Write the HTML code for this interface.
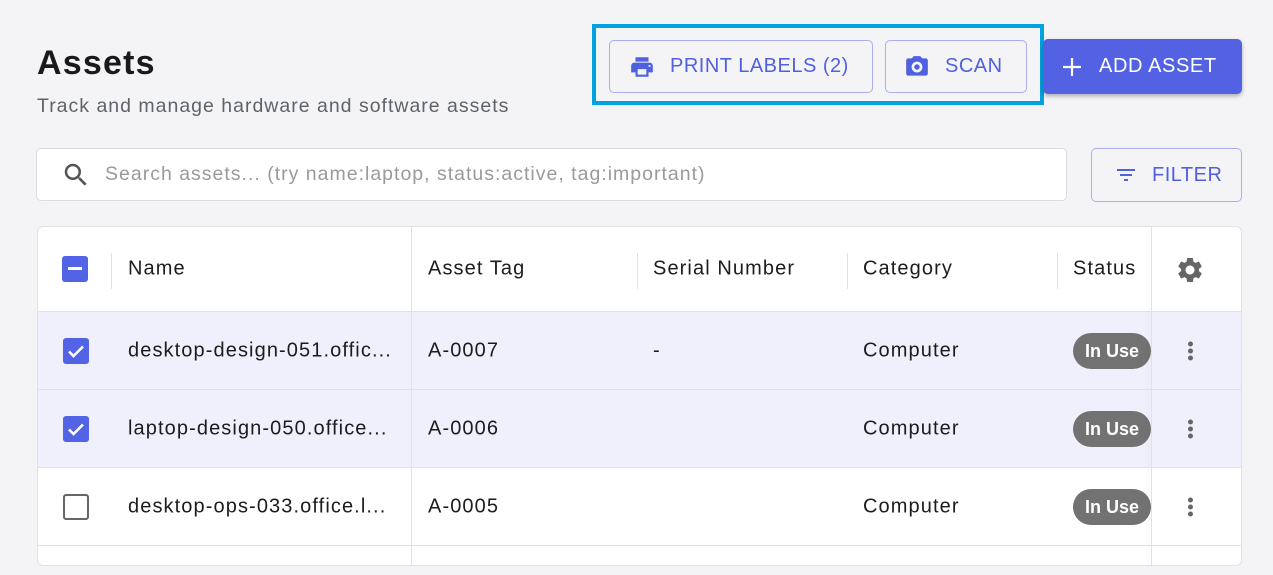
<!DOCTYPE html>
<html><head><meta charset="utf-8"><style>
*{box-sizing:border-box;margin:0;padding:0}
body{width:1273px;height:558px;background:#f4f4f6;font-family:"Liberation Sans",sans-serif;position:relative;overflow:hidden;color:#1c1c1e;letter-spacing:1.1px}
.a{position:absolute}
h1{position:absolute;left:37px;top:44px;font-size:34px;font-weight:700;color:#1a1a1a;letter-spacing:1.2px}
.sub{left:37px;top:95px;font-size:19.5px;color:#5f6368;letter-spacing:1.0px}
.ob{border:1px solid #a9aef0;border-radius:5px;color:#5060e0;font-size:20px;display:flex;align-items:center;background:#f4f4f6;letter-spacing:0.5px}
.tbl{left:37px;top:226px;width:1205px;height:340px;background:#fff;border:1px solid #e2e2e6;border-radius:6px}
.row{position:absolute;left:0;width:1203px;border-top:1px solid #e2e2e6}
.cell{position:absolute;font-size:20px;top:50%;transform:translateY(-50%);white-space:nowrap}
.cb{position:absolute;left:25px;width:26px;height:26px;border-radius:3px;background:#5363e6;top:50%;transform:translateY(-50%)}
.pill{position:absolute;left:1035px;top:50%;transform:translateY(-50%);width:78px;height:36px;border-radius:18px;background:#727272;color:#fff;font-weight:700;font-size:18px;text-align:center;line-height:36px;letter-spacing:0}
.dots{position:absolute;left:1150px;top:50%;transform:translateY(-50%);width:4px}
.dots i{display:block;width:5px;height:5px;border-radius:50%;background:#666;margin:2px 0}
</style></head><body>
<h1>Assets</h1>
<div class="a sub">Track and manage hardware and software assets</div>
<div class="a" style="left:592px;top:24px;width:452px;height:81px;border:4px solid #00a3e0"></div>
<div class="a ob" style="left:609px;top:40px;width:264px;height:53px;padding-left:18px">
<svg width="28" height="26" viewBox="0 0 24 24"><path fill="#5060e0" d="M19 8H5c-1.66 0-3 1.34-3 3v6h4v4h12v-4h4v-6c0-1.66-1.340-3-3-3zm-3 11H8v-5h8v5zm3-7c-.55 0-1-.45-1-1s.45-1 1-1 1 .45 1 1-.45 1-1 1zm-1-9H6v4h12V3z"/></svg>
<span style="margin-left:14px">PRINT LABELS (2)</span></div>
<div class="a ob" style="left:885px;top:40px;width:142px;height:53px;padding-left:18px">
<svg width="26" height="26" viewBox="0 0 24 24"><path fill="#5060e0" d="M9 2 7.17 4H4c-1.1 0-2 .9-2 2v12c0 1.1.9 2 2 2h16c1.1 0 2-.9 2-2V6c0-1.1-.9-2-2-2h-3.17L15 2H9zm3 15a5 5 0 1 1 0-10 5 5 0 0 1 0 10zm0-2.5a2.5 2.5 0 1 0 0-5 2.5 2.5 0 0 0 0 5z"/></svg>
<span style="margin-left:15px">SCAN</span></div>
<div class="a" style="left:1043px;top:39px;width:199px;height:55px;background:#5262e3;border-radius:5px;box-shadow:0 2px 4px rgba(0,0,0,.3);color:#fff;font-size:20px;display:flex;align-items:center;padding-left:18px;letter-spacing:0.6px">
<svg width="22" height="22" viewBox="0 0 22 22"><path d="M11 2v18M2 11h18" stroke="#fff" stroke-width="2.2"/></svg><span style="margin-left:16px">ADD ASSET</span></div>
<div class="a" style="left:36px;top:148px;width:1031px;height:53px;background:#fff;border:1px solid #dcdce0;border-radius:5px;display:flex;align-items:center;padding-left:24px;font-size:19.5px;color:#9a9a9e;letter-spacing:1.0px">
<svg width="30" height="30" viewBox="0 0 24 24"><path fill="#555" d="M15.5 14h-.79l-.28-.27A6.47 6.47 0 0 0 16 9.5 6.5 6.5 0 1 0 9.5 16c1.61 0 3.09-.59 4.230-1.57l.27.28v.79l5 4.99L20.49 19l-4.99-5zm-6 0C7.01 14 5 11.990 5 9.5S7.01 5 9.5 5 14 7.01 14 9.5 11.99 14 9.5 14z"/></svg>
<span style="margin-left:14px">Search assets... (try name:laptop, status:active, tag:important)</span></div>
<div class="a ob" style="left:1091px;top:148px;width:151px;height:54px;padding-left:22px">
<svg width="24" height="24" viewBox="0 0 24 24"><path fill="#5060e0" d="M10 18h4v-2h-4v2zM3 6v2h18V6H3zm3 7h12v-2H6v2z"/></svg><span style="margin-left:14px">FILTER</span></div>

<div class="a tbl">
 <div class="row" style="top:0;height:84px;border-top:none">
  <div class="cb" style="left:24px"><div style="position:absolute;left:6px;top:11px;width:14px;height:3px;background:#fff"></div></div>
  <div class="a" style="left:73px;top:26px;width:1px;height:36px;background:#e2e2e6"></div>
  <div class="cell" style="left:90px">Name</div>
  <div class="cell" style="left:390px">Asset Tag</div>
  <div class="a" style="left:599px;top:26px;width:1px;height:36px;background:#e2e2e6"></div>
  <div class="cell" style="left:615px">Serial Number</div>
  <div class="a" style="left:809px;top:26px;width:1px;height:36px;background:#e2e2e6"></div>
  <div class="cell" style="left:825px">Category</div>
  <div class="a" style="left:1019px;top:26px;width:1px;height:36px;background:#e2e2e6"></div>
  <div class="cell" style="left:1035px">Status</div>
  <svg class="a" style="left:1137px;top:28px" width="30" height="30" viewBox="0 0 24 24"><path fill="#666" d="M19.14 12.94c.04-.3.06-.61.06-.94 0-.32-.02-.64-.07-.94l2.030-1.58a.49.49 0 0 0 .12-.61l-1.92-3.32a.49.49 0 0 0-.59-.22l-2.39.96c-.5-.38-1.03-.7-1.62-.94l-.36-2.54a.48.48 0 0 0-.48-.41h-3.84c-.24 0-.43.17-.47.41l-.36 2.54c-.59.24-1.13.57-1.62.94l-2.39-.96a.48.48 0 0 0-.59.22L2.74 8.87c-.12.21-.08.47.12.61l2.03 1.58c-.05.3-.07.63-.07.94s.02.64.07.94l-2.03 1.58a.49.49 0 0 0-.12.61l1.92 3.32c.12.22.37.29.59.22l2.39-.96c.5.38 1.03.7 1.62.94l.36 2.54c.05.24.24.41.48.41h3.84c.24 0 .44-.17.47-.41l.36-2.54c.59-.24 1.13-.56 1.62-.94l2.39.96c.22.08.47 0 .59-.22l1.92-3.32c.12-.22.07-.47-.12-.61l-2.01-1.58zM12 15.6c-1.98 0-3.6-1.62-3.6-3.6s1.62-3.6 3.6-3.6 3.6 1.62 3.6 3.6-1.62 3.6-3.6 3.6z"/></svg>
 </div>
 <div class="row" style="top:84px;height:78px;background:#eff0fc">
  <div class="cb"><svg width="26" height="26" viewBox="0 0 26 26"><path d="M6 13.5l4.5 4.5L20 8.5" stroke="#fff" stroke-width="2.6" fill="none"/></svg></div>
  <div class="cell" style="left:90px">desktop-design-051.offic...</div>
  <div class="cell" style="left:390px">A-0007</div>
  <div class="cell" style="left:615px">-</div>
  <div class="cell" style="left:825px">Computer</div>
  <div class="pill">In Use</div><div class="dots"><i></i><i></i><i></i></div>
 </div>
 <div class="row" style="top:162px;height:78px;background:#eff0fc">
  <div class="cb"><svg width="26" height="26" viewBox="0 0 26 26"><path d="M6 13.5l4.5 4.5L20 8.5" stroke="#fff" stroke-width="2.6" fill="none"/></svg></div>
  <div class="cell" style="left:90px">laptop-design-050.office...</div>
  <div class="cell" style="left:390px">A-0006</div>
  <div class="cell" style="left:825px">Computer</div>
  <div class="pill">In Use</div><div class="dots"><i></i><i></i><i></i></div>
 </div>
 <div class="row" style="top:240px;height:78px">
  <div class="cb" style="background:#fff;border:2px solid #666"></div>
  <div class="cell" style="left:90px">desktop-ops-033.office.l...</div>
  <div class="cell" style="left:390px">A-0005</div>
  <div class="cell" style="left:825px">Computer</div>
  <div class="pill">In Use</div><div class="dots"><i></i><i></i><i></i></div>
 </div>
 <div class="row" style="top:318px;height:30px"></div>
 <div class="a" style="left:373px;top:0;width:1px;height:340px;background:#e2e2e6"></div>
 <div class="a" style="left:1113px;top:0;width:1px;height:340px;background:#e2e2e6;box-shadow:-3px 0 5px rgba(0,0,0,.08)"></div>
</div>
</body></html>
